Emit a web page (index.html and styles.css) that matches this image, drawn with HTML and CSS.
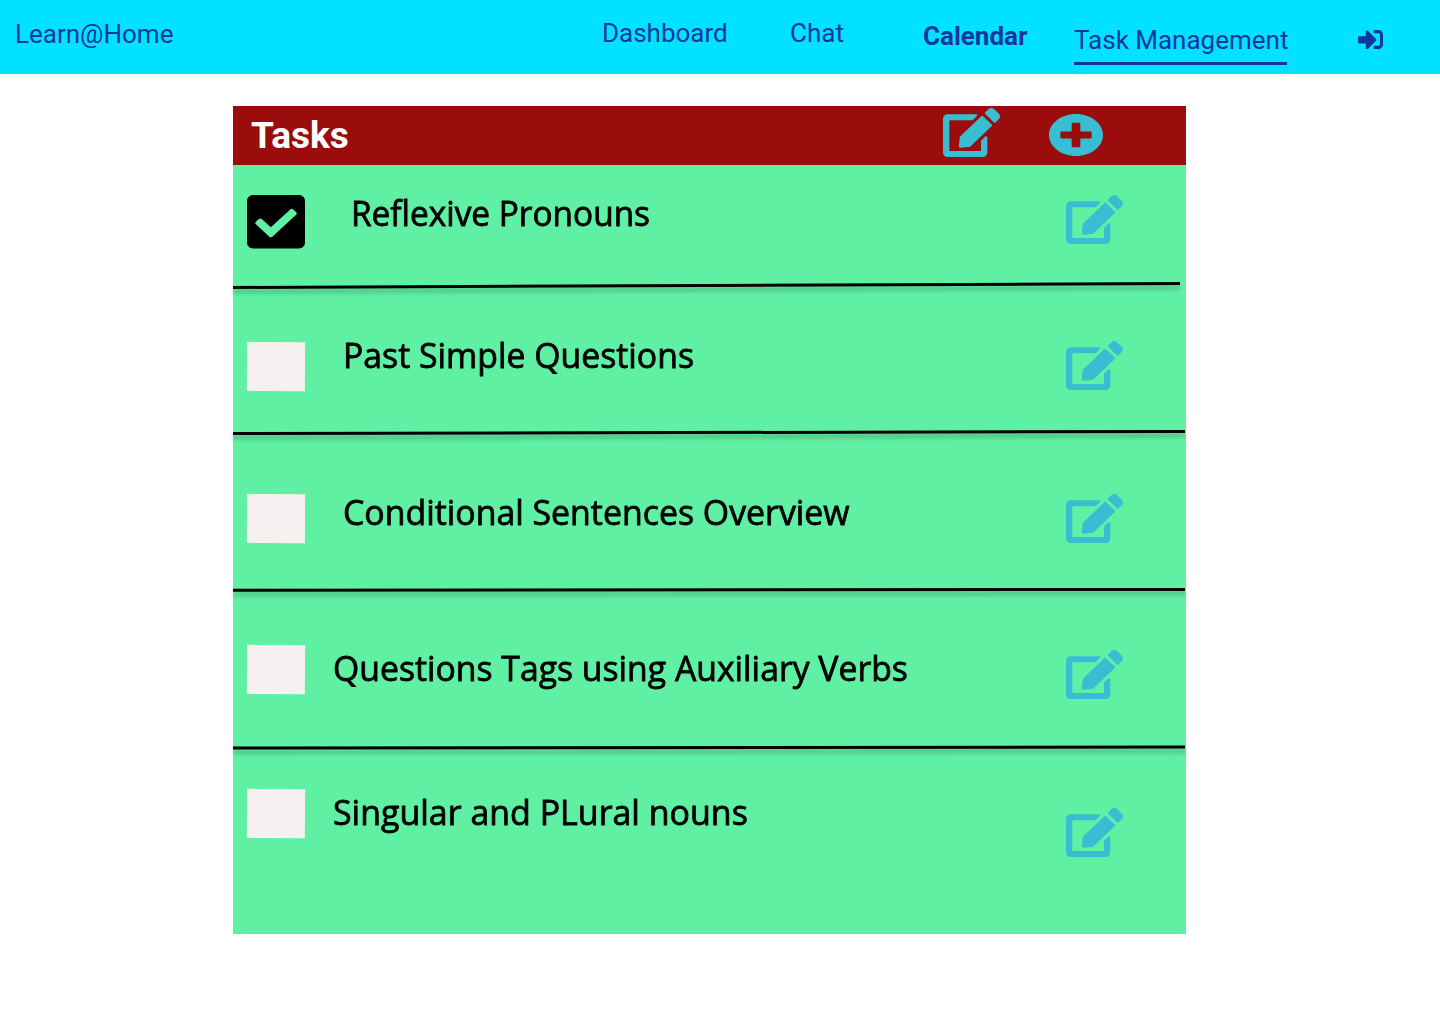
FILE: index.html
```html
<!DOCTYPE html>
<html lang="en">
<head>
<meta charset="utf-8">
<title>Learn@Home – Task Management</title>
<link rel="stylesheet" href="styles.css">
</head>
<body>
<svg class="sprite" aria-hidden="true">
  <symbol id="edit" viewBox="0 0 576 512" preserveAspectRatio="none"><path d="M402.6 83.2l90.2 90.2c3.8 3.8 3.8 10 0 13.8L274.4 405.6l-92.8 10.3c-12.4 1.4-22.9-9.1-21.5-21.5l10.3-92.8L388.8 83.2c3.8-3.8 10-3.8 13.8 0zm162-22.9l-48.8-48.8c-15.2-15.2-39.9-15.2-55.2 0l-35.4 35.4c-3.8 3.8-3.8 10 0 13.8l90.2 90.2c3.8 3.8 10 3.8 13.8 0l35.4-35.4c15.2-15.3 15.2-40 0-55.2zM384 346.2V448H64V128h229.8c3.2 0 6.2-1.3 8.5-3.5l40-40c7.6-7.6 2.2-20.5-8.5-20.5H48C21.5 64 0 85.5 0 112v352c0 26.5 21.5 48 48 48h352c26.5 0 48-21.5 48-48V306.2c0-10.7-12.9-16-20.5-8.5l-40 40c-2.2 2.3-3.5 5.3-3.5 8.5z"/></symbol>
</svg>
<header class="topbar">
  <a class="brand">Learn@Home</a>
  <nav class="nav">
    <a class="link dashboard">Dashboard</a>
    <a class="link chat">Chat</a>
    <a class="link calendar">Calendar</a>
    <a class="link management">Task Management</a>
    <svg class="signin" viewBox="0 64 512 384" preserveAspectRatio="none"><path d="M416 448h-84c-6.600 0-12-5.400-12-12v-40c0-6.600 5.400-12 12-12h84c17.700 0 32-14.300 32-32V160c0-17.700-14.300-32-32-32h-84c-6.600 0-12-5.400-12-12V76c0-6.600 5.400-12 12-12h84c53 0 96 43 96 96v192c0 53-43 96-96 96zm-47-201L201 79c-15-15-41-4.500-41 17v96H24c-13.300 0-24 10.700-24 24v96c0 13.300 10.700 24 24 24h136v96c0 21.500 26 32 41 17l168-168c9.300-9.400 9.300-24.600 0-34z"/></svg>
  </nav>
</header>
<main class="panel">
  <div class="panel-head">
    <h1 class="heading">Tasks</h1>
    <svg class="edit"><use href="#edit"/></svg>
    <svg class="add" viewBox="8 8 496 496" preserveAspectRatio="none"><path d="M256 8C119 8 8 119 8 256s111 248 248 248 248-111 248-248S393 8 256 8zm144 276c0 6.600-5.400 12-12 12h-92v92c0 6.600-5.400 12-12 12h-56c-6.600 0-12-5.400-12-12v-92h-92c-6.600 0-12-5.400-12-12v-56c0-6.600 5.400-12 12-12h92v-92c0-6.600 5.400-12 12-12h56c6.600 0 12 5.400 12 12v92h92c6.600 0 12 5.400 12 12v56z"/></svg>
  </div>
  <section class="task task-1">
    <svg class="checked" viewBox="0 32 448 448" preserveAspectRatio="none"><path d="M400 480H48c-26.510 0-48-21.490-48-48V80c0-26.510 21.490-48 48-48h352c26.510 0 48 21.490 48 48v352c0 26.510-21.490 48-48 48zm-204.686-98.059l184-184c6.248-6.248 6.248-16.379 0-22.627l-22.627-22.627c-6.248-6.248-16.379-6.249-22.628 0L184 302.745l-70.059-70.059c-6.248-6.248-16.379-6.248-22.628 0l-22.627 22.627c-6.248 6.248-6.248 16.379 0 22.627l104 104c6.249 6.250 16.379 6.250 22.628.001z"/></svg>
    <span class="title">Reflexive Pronouns</span>
    <svg class="edit"><use href="#edit"/></svg>
  </section>
  <svg class="divider"><path d="M0 5.500L947 1.500"/></svg>
  <section class="task task-2">
    <span class="box"></span>
    <span class="title">Past Simple Questions</span>
    <svg class="edit"><use href="#edit"/></svg>
  </section>
  <svg class="divider"><path d="M0 4.500L952 2.500"/></svg>
  <section class="task task-3">
    <span class="box"></span>
    <span class="title">Conditional Sentences Overview</span>
    <svg class="edit"><use href="#edit"/></svg>
  </section>
  <svg class="divider"><path d="M0 4.300L952 3.400"/></svg>
  <section class="task task-4">
    <span class="box"></span>
    <span class="title">Questions Tags using Auxiliary Verbs</span>
    <svg class="edit"><use href="#edit"/></svg>
  </section>
  <svg class="divider"><path d="M0 4L952 3"/></svg>
  <section class="task task-5">
    <span class="box"></span>
    <span class="title">Singular and PLural nouns</span>
    <svg class="edit"><use href="#edit"/></svg>
  </section>
</main>
</body>
</html>
```
FILE: styles.css
```css
* { box-sizing: border-box; }
body { margin: 0; background: #fff; font-family: Roboto, "Liberation Sans", sans-serif; }
svg { display: block; flex: none; }
.sprite { width: 0; height: 0; position: absolute; }

.topbar { display: flex; justify-content: space-between; height: 74px; padding: 0 57px 0 15px; background: #00e2ff; color: #1037a0; font-size: 26px; line-height: 30px; white-space: nowrap; }
.brand { margin-top: 19px; }
.nav { display: flex; align-items: flex-start; }
.link { flex: none; }
.dashboard { width: 188px; margin-top: 18px; }
.chat { width: 133px; margin-top: 18px; }
.calendar { width: 151px; margin-top: 21px; font-weight: 700; }
.management { width: 213px; height: 40px; margin: 25px 71px 0 0; border-bottom: 3px solid #1037a0; }
.signin { width: 25px; height: 19px; margin-top: 30px; fill: #1037a0; }

.panel { width: 953px; height: 828px; margin: 32px 0 0 233px; background: #60f0a4; }
.panel-head { display: flex; align-items: flex-start; height: 59px; padding: 2px 83px 0 18px; background: #9b0d0d; }
.heading { margin: 7px auto 0 0; color: #fff; font-size: 37px; line-height: 42px; font-weight: 700; }
.edit { width: 57px; height: 49px; fill: #38bed3; }
.add { width: 54px; height: 42px; margin: 6px 0 0 49px; fill: #38bed3; }

.task { display: flex; align-items: flex-start; padding: 0 63px 0 14px; }
.task .edit { margin-left: auto; }
.title { font-family: "Open Sans", "Noto Sans", sans-serif; font-size: 35px; line-height: 45px; font-weight: 500; color: #000; white-space: nowrap; transform: scaleX(.965); transform-origin: 0 0; -webkit-text-stroke: .8px #000; }
.checked { width: 58px; height: 53.500px; }
.box { flex: none; width: 58px; height: 48.500px; background: #f6f0f0; transform: rotate(.3deg); }
.divider { width: 953px; height: 16px; margin: -4px 0 -12px; overflow: visible; stroke: #000; stroke-width: 3; filter: drop-shadow(0 4px 2px rgba(0, 0, 0, .25)); }

.task-1 { height: 121px; padding-top: 25px; }
.task-1 .checked { margin-top: 5px; }
.task-1 .title { margin-left: 46px; transform: scaleX(.954); }
.task-1 .edit { margin-top: 5px; }

.task-2 { height: 147px; padding-top: 46px; }
.task-2 .box { margin-top: 10px; }
.task-2 .title { margin-left: 38px; }
.task-2 .edit { margin-top: 9px; }

.task-3 { height: 157px; padding-top: 56px; }
.task-3 .box { margin-top: 5px; }
.task-3 .title { margin-left: 38px; transform: scaleX(.967); }
.task-3 .edit { margin-top: 5px; }

.task-4 { height: 158px; padding-top: 55px; }
.task-4 .box { margin-top: 0; }
.task-4 .title { margin-left: 28px; transform: scaleX(.964); }
.task-4 .edit { margin-top: 5px; }

.task-5 { height: 186px; padding-top: 41px; }
.task-5 .box { margin-top: 0; }
.task-5 .title { margin-left: 28px; transform: scaleX(.97); }
.task-5 .edit { margin-top: 19px; }
```
